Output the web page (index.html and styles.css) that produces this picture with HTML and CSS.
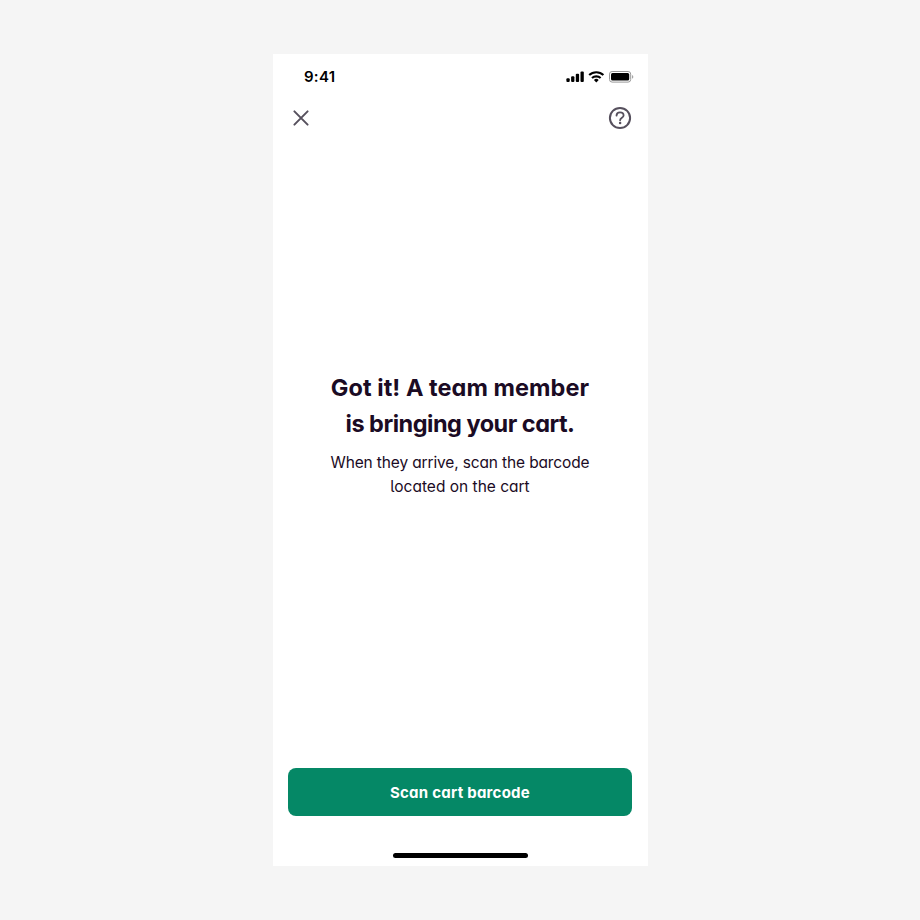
FILE: index.html
```html
<!DOCTYPE html>
<html lang="en">
<head>
<meta charset="utf-8">
<title>Scan cart</title>
<link rel="stylesheet" href="styles.css">
</head>
<body>
<div class="phone">
  <div class="status">
    <span class="time">9:41</span>
    <svg class="indicators" width="70" height="14" viewBox="0 0 70 14" aria-hidden="true">
      <rect x="1.4" y="8.3" width="3.3" height="3.8" rx="1"/>
      <rect x="6.1" y="6.2" width="3.3" height="5.9" rx="1"/>
      <rect x="10.8" y="3.8" width="3.3" height="8.3" rx="1"/>
      <rect x="15.5" y="1.4" width="3.3" height="10.7" rx="1"/>
      <g class="waves">
        <path d="M24.2 5.1a10.1 10.1 0 0 1 14.2 0"/>
        <path d="M27 8.1a6.1 6.1 0 0 1 8.6 0"/>
      </g>
      <path d="M28.9 9.9a3.4 3.4 0 0 1 4.8 0L31.3 12.4z"/>
      <rect class="shell" x="44.5" y="1.5" width="21.2" height="10.6" rx="2.6"/>
      <rect x="46" y="3" width="18.2" height="7.6" rx="1.5"/>
      <path class="tip" d="M67.1 5v3.8c1.6-.6 1.6-3.2 0-3.8z"/>
    </svg>
  </div>
  <div class="nav">
    <svg width="24" height="24" viewBox="0 0 24 24" aria-label="Close"><path class="line" d="M5.4 5.4l13.2 13.2M18.6 5.4L5.4 18.6"/></svg>
    <svg width="24" height="24" viewBox="0 0 24 24" aria-label="Help"><circle class="line" cx="12" cy="12" r="10.1"/><path class="line hook" d="M8.5 9.6c.1-2 1.5-3.3 3.5-3.3s3.6 1.2 3.6 3.1c0 2.4-3.5 2.3-3.5 4.9"/><circle class="dot" cx="12.1" cy="17" r="1.25"/></svg>
  </div>
  <main class="message">
    <h1><span class="wide">Got it! A team member</span><br><span class="tight">is bringing your cart.</span></h1>
    <p><span class="lead">When they arrive, scan the barcode</span><br>located on the cart</p>
  </main>
  <button class="scan">Scan cart barcode</button>
  <div class="home"></div>
</div>
</body>
</html>
```

FILE: styles.css
```css
* { box-sizing: border-box; }
body {
  margin: 0;
  height: 920px;
  background: #f5f5f5;
  display: flex;
  justify-content: center;
  align-items: center;
  padding-left: 1px;
  font-family: Inter, "Liberation Sans", sans-serif;
}
.phone {
  width: 375px;
  height: 812px;
  background: #fff;
  display: flex;
  flex-direction: column;
  align-items: center;
}
.status {
  width: 100%;
  height: 44px;
  padding: 1px 13px 0 31px;
  display: flex;
  justify-content: space-between;
  align-items: center;
}
.time { font-size: 15px; font-weight: 600; letter-spacing: 0.25px; color: #000; }
.waves { fill: none; stroke: #000; stroke-width: 2.1; }
.shell { fill: none; stroke: #999; stroke-width: 1; }
.tip { fill: #999; }
.nav {
  width: 100%;
  height: 40px;
  padding: 0 16px;
  display: flex;
  justify-content: space-between;
  align-items: center;
}
.line { fill: none; stroke: #56505d; stroke-width: 2; stroke-linecap: round; }
.hook { stroke-width: 1.8; }
.dot { fill: #56505d; }
.message {
  flex: 1;
  padding-top: 232px;
  margin-right: 1px;
  text-align: center;
  color: #1b0b24;
  white-space: nowrap;
  font-feature-settings: "cv11", "cv05";
}
h1 { margin: 0; font-size: 23.5px; line-height: 36px; font-weight: 700; }
.wide { letter-spacing: 0.05px; }
.tight { letter-spacing: -0.5px; }
p { margin: 9px 0 0; font-size: 15.5px; line-height: 24px; }
.lead { letter-spacing: -0.14px; }
.scan {
  width: 344px;
  height: 48px;
  margin-right: 1px;
  padding: 2px 0 0;
  border: 0;
  border-radius: 8px;
  background: #058866;
  color: #fff;
  font: 700 15px/24px Inter, "Liberation Sans", sans-serif;
  font-feature-settings: "cv11", "cv05";
  letter-spacing: 0.25px;
}
.home {
  width: 135px;
  height: 5px;
  margin: 37px 0 8px;
  border-radius: 3px;
  background: #000;
}
```
